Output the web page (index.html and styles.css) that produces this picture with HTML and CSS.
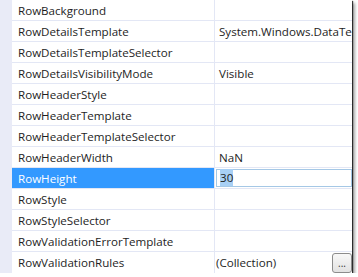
FILE: index.html
```html
<!DOCTYPE html>
<html lang="en">

<head>
  <meta charset="UTF-8">
  <title>Properties</title>
  <link rel="stylesheet" href="styles.css">
</head>

<body>
  <div class="frame">
    <div class="grid">
      <div class="row"><div class="name">RowBackground</div><div class="value"></div></div>
      <div class="row"><div class="name">RowDetailsTemplate</div><div class="value">System.Windows.DataTe</div></div>
      <div class="row"><div class="name">RowDetailsTemplateSelector</div><div class="value"></div></div>
      <div class="row"><div class="name">RowDetailsVisibilityMode</div><div class="value">Visible</div></div>
      <div class="row"><div class="name">RowHeaderStyle</div><div class="value"></div></div>
      <div class="row"><div class="name">RowHeaderTemplate</div><div class="value"></div></div>
      <div class="row"><div class="name">RowHeaderTemplateSelector</div><div class="value"></div></div>
      <div class="row"><div class="name">RowHeaderWidth</div><div class="value">NaN</div></div>
      <div class="row selected">
        <div class="name">RowHeight</div>
        <div class="value"><div class="edit"><span class="sel">30</span></div></div>
      </div>
      <div class="row"><div class="name">RowStyle</div><div class="value"></div></div>
      <div class="row"><div class="name">RowStyleSelector</div><div class="value"></div></div>
      <div class="row"><div class="name">RowValidationErrorTemplate</div><div class="value"></div></div>
      <div class="row last">
        <div class="name">RowValidationRules</div>
        <div class="value collection"><span>(Collection)</span><button class="dots">...</button></div>
      </div>
    </div>
  </div>
</body>

</html>
```

FILE: styles.css
```css
body {
  margin: 0;
  padding: 0;
  background: #ffffff;
  font-family: "Open Sans", "Noto Sans", sans-serif;
  font-size: 11.6px;
  color: #1e1e1e;
}

.frame {
  width: 352px;
  height: 273px;
  background: #e9ebf7;
  padding-left: 12px;
  box-sizing: border-box;
  box-shadow: 1px 1px 1px rgba(0, 0, 0, 0.75), 3px 3px 3px rgba(0, 0, 0, 0.35);
  overflow: hidden;
}

.grid {
  background: #ffffff;
  height: 100%;
}

.row {
  display: flex;
  height: 21px;
  box-sizing: border-box;
  border-bottom: 1px solid #e3e7f5;
}

.row.last {
  border-bottom: none;
}

.name {
  width: 203px;
  padding: 1px 0 0 6px;
  box-sizing: border-box;
  border-right: 1px solid #e3e7f5;
  line-height: 19px;
  white-space: nowrap;
  overflow: hidden;
}

.value {
  flex: 1;
  padding: 1px 0 0 4px;
  line-height: 19px;
  white-space: nowrap;
  overflow: hidden;
}

.selected .name {
  background: #3399ff;
  color: #ffffff;
}

.selected .value {
  padding: 1px 0 0 1px;
}

.edit {
  height: 18px;
  box-sizing: border-box;
  border: 1px solid #a5c8e6;
  line-height: 16px;
  padding-left: 3px;
}

.sel {
  background: #a8d0f5;
  padding: 1px 0;
}

.collection {
  display: flex;
  align-items: flex-start;
  justify-content: space-between;
  padding-left: 1px;
  overflow: visible;
}

.dots {
  width: 20px;
  height: 20px;
  margin-top: 0;
  padding: 0;
  border: 1px solid #8c8c8c;
  border-radius: 3px;
  background: linear-gradient(#f8f8f8, #e2e2e2);
  font-family: "Open Sans", sans-serif;
  font-size: 10px;
  line-height: 16px;
  color: #333333;
}
```
